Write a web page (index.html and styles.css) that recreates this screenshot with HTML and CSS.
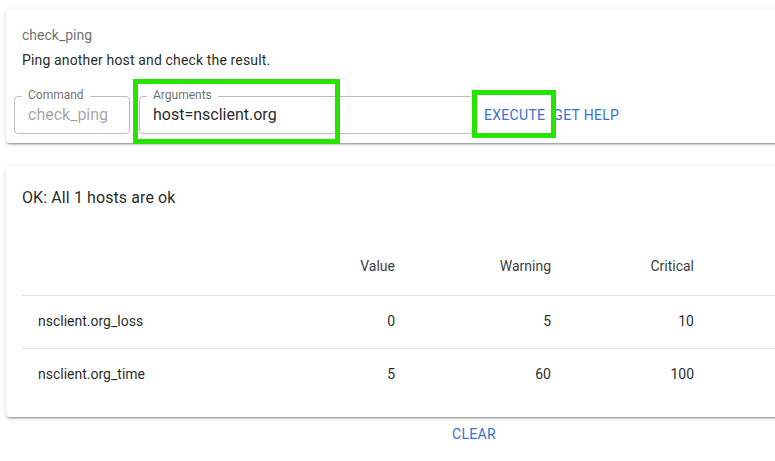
FILE: index.html
```html
<!DOCTYPE html>
<html>
<head>
<meta charset="utf-8">
<link rel="stylesheet" href="styles.css">
</head>
<body>
<div class="page">
  <section class="card query-card">
    <div class="cmd-title">check_ping</div>
    <div class="cmd-desc">Ping another host and check the result.</div>
    <div class="field-row">
      <div class="field field-command">
        <span class="field-label">Command</span>
        <span class="field-value disabled">check_ping</span>
      </div>
      <div class="field field-args">
        <span class="field-label">Arguments</span>
        <span class="field-value">host=nsclient.org</span>
      </div>
      <button class="btn">EXECUTE</button>
      <button class="btn">GET HELP</button>
    </div>
  </section>

  <section class="card result-card">
    <div class="result-title">OK: All 1 hosts are ok</div>
    <table class="perf">
      <thead>
        <tr><th class="c-name"></th><th class="num c-val">Value</th><th class="num c-warn">Warning</th><th class="num c-crit">Critical</th><th class="c-rest"></th></tr>
      </thead>
      <tbody>
        <tr><td>nsclient.org_loss</td><td class="num">0</td><td class="num">5</td><td class="num">10</td><td></td></tr>
        <tr><td>nsclient.org_time</td><td class="num">5</td><td class="num">60</td><td class="num">100</td><td></td></tr>
      </tbody>
    </table>
  </section>

  <div class="clear-row"><button class="btn">CLEAR</button></div>

  <div class="highlight hl-args"></div>
  <div class="highlight hl-exec"></div>
</div>
</body>
</html>
```

FILE: styles.css
```css
html, body {
  margin: 0;
  padding: 0;
  background: #fff;
  overflow: hidden;
}
body {
  font-family: Roboto, "Noto Sans", sans-serif;
  color: rgba(0,0,0,.87);
}
.page {
  position: relative;
  width: 948px;
  padding: 9px 6px 0 6px;
  box-sizing: border-box;
}
.card {
  background: #fff;
  border-radius: 4px;
  box-shadow: 0 3px 1px -2px rgba(0,0,0,.2), 0 2px 2px 0 rgba(0,0,0,.14), 0 1px 5px 0 rgba(0,0,0,.12);
}
.query-card {
  padding: 16px 8px 9px 8px;
}
.cmd-title {
  font-size: 14px;
  line-height: 20px;
  color: rgba(0,0,0,.6);
  padding-left: 8px;
}
.cmd-desc {
  font-size: 14px;
  line-height: 20px;
  letter-spacing: 0.15px;
  margin-top: 5px;
  padding-left: 8px;
}
.field-row {
  display: flex;
  align-items: center;
  margin-top: 26px;
}
.field {
  position: relative;
  box-sizing: border-box;
  height: 38px;
  border: 1px solid #bdbdbd;
  border-radius: 4px;
  padding: 0 13px;
  display: flex;
  align-items: center;
}
.field-command { width: 116px; }
.field-args { width: 335px; margin-left: 9px; }
.field-label {
  position: absolute;
  left: 7px;
  top: -9px;
  padding: 0 6px;
  background: #fff;
  font-size: 12px;
  line-height: 14px;
  color: rgba(0,0,0,.6);
}
.field-value {
  font-size: 16px;
  line-height: 24px;
  white-space: nowrap;
}
.field-value.disabled { color: rgba(0,0,0,.38); }
.btn {
  font-family: Roboto, "Noto Sans", sans-serif;
  background: none;
  border: 0;
  padding: 0 4px;
  font-size: 14px;
  line-height: 20px;
  letter-spacing: 0.3px;
  color: #3a70d6;
  cursor: pointer;
}
.field-row .btn:first-of-type { margin-left: 6px; }
.result-card {
  margin-top: 23px;
  padding: 20px 16px 16px 16px;
}
.result-title {
  font-size: 16px;
  line-height: 24px;
  letter-spacing: 0.1px;
}
.perf {
  margin-top: 30px;
  width: 904px;
  border-collapse: collapse;
  table-layout: fixed;
  font-size: 14px;
  line-height: 20px;
}
.perf th.c-name { width: 233px; }
.perf th.c-val { width: 156px; }
.perf th.c-warn { width: 156px; }
.perf th.c-crit { width: 143px; }
.perf th.c-rest { width: auto; }
.perf th, .perf td {
  box-sizing: border-box;
}
.perf th {
  font-weight: 400;
  color: rgba(0,0,0,.8);
  padding: 16px 16px 19px 16px;
  border-bottom: 1px solid #e0e0e0;
  text-align: left;
}
.perf td {
  padding: 15px 16px 17px 16px;
  border-bottom: 1px solid #e0e0e0;
  white-space: nowrap;
}
.perf tbody tr:last-child td { border-bottom: 0; }
.perf .num { text-align: right; }
.clear-row {
  display: flex;
  justify-content: center;
  margin-top: 7px;
}
.highlight {
  position: absolute;
  box-sizing: border-box;
  border: 5px solid #27e400;
}
.hl-args { left: 133px; top: 79px; width: 207px; height: 65px; }
.hl-exec { left: 472px; top: 90px; width: 84px; height: 48px; }
```
